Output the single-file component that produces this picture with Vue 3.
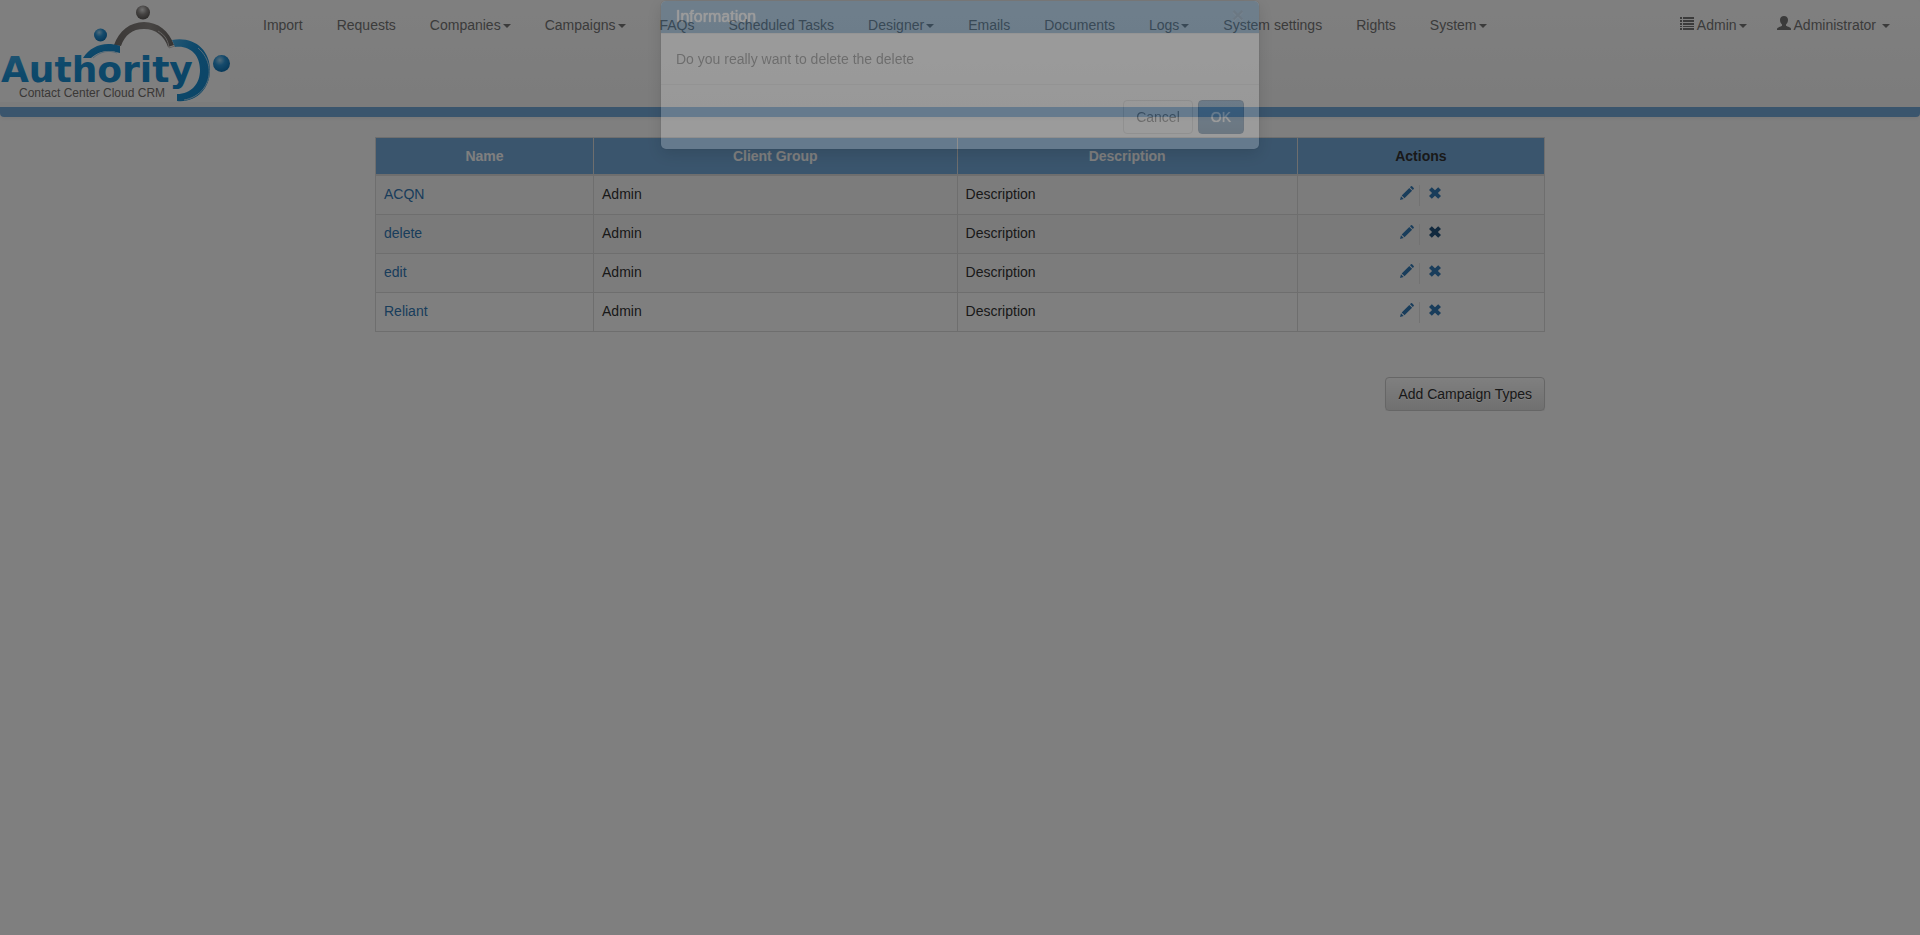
<script setup>
const menu = [
  { label: 'Import' },
  { label: 'Requests' },
  { label: 'Companies', caret: true },
  { label: 'Campaigns', caret: true },
  { label: 'FAQs' },
  { label: 'Scheduled Tasks' },
  { label: 'Designer', caret: true },
  { label: 'Emails' },
  { label: 'Documents' },
  { label: 'Logs', caret: true },
  { label: 'System settings' },
  { label: 'Rights' },
  { label: 'System', caret: true },
]

const rows = [
  { name: 'ACQN' },
  { name: 'delete', active: true },
  { name: 'edit' },
  { name: 'Reliant' },
]
</script>

<template>
  <div class="page">
    <header class="navbar">
      <a class="brand" href="#" aria-label="Authority Contact Center Cloud CRM">
        <svg class="logo" viewBox="0 0 230 102" aria-hidden="true">
          <defs>
            <linearGradient id="blue" x1="0" y1="0" x2="1" y2="1">
              <stop offset="0" stop-color="#4bb0e8" />
              <stop offset="0.35" stop-color="#1c92d6" />
              <stop offset="1" stop-color="#1688cc" />
            </linearGradient>
            <linearGradient id="gray" x1="0" y1="0" x2="1" y2="0">
              <stop offset="0" stop-color="#75706d" />
              <stop offset="0.6" stop-color="#8f8a87" />
              <stop offset="1" stop-color="#6c6764" />
            </linearGradient>
            <radialGradient id="blueBall" cx="0.4" cy="0.3" r="0.7">
              <stop offset="0" stop-color="#9fd6f5" />
              <stop offset="0.45" stop-color="#2a95d8" />
              <stop offset="1" stop-color="#0f72b4" />
            </radialGradient>
            <radialGradient id="grayBall" cx="0.45" cy="0.3" r="0.7">
              <stop offset="0" stop-color="#e0dfde" />
              <stop offset="0.5" stop-color="#8a8684" />
              <stop offset="1" stop-color="#5a5653" />
            </radialGradient>
          </defs>
          <rect width="230" height="102" fill="#fff" />
          <path d="M114 45C119 31 130 22 144 22C158 22 169 31 174 45L168 47C164 36 156 29 144 29C132 29 125 35 121 46Z" fill="url(#gray)" />
          <path d="M158 31C165 35 168 40 169 48L175 46" fill="none" stroke="#c9c6c4" stroke-width="1" />
          <path d="M83 58C91 46 104 41 120 46L120 53C108 49 99 51 91 58Z" fill="url(#blue)" />
          <path d="M93 58C101 51 109 50 117 53" fill="none" stroke="#a9d4ee" stroke-width="1" />
          <path d="M172 40C193 36 210 49 210 70C210 89 196 103 177 101V94C191 94 200 84 200 70C200 55 190 45 175 47Z" fill="url(#blue)" />
          <path d="M198 48C210 58 213 75 204 88C199 95 191 99 184 100" fill="none" stroke="#a9d4ee" stroke-width="1" />
          <circle cx="143" cy="12.500" r="7" fill="url(#grayBall)" />
          <circle cx="100.500" cy="35" r="6.500" fill="url(#blueBall)" />
          <circle cx="221.500" cy="63.500" r="8.500" fill="url(#blueBall)" />
          <text class="logo-name" x="1" y="82">Authority</text>
          <text class="logo-tag" x="19" y="97">Contact Center Cloud CRM</text>
        </svg>
      </a>
      <nav class="menu" aria-label="Main">
        <a v-for="(item, i) in menu" :key="i" class="menu-link" href="#">
          {{ item.label }}<span v-if="item.caret" class="caret"></span>
        </a>
      </nav>
      <nav class="menu account" aria-label="Account">
        <a class="menu-link" href="#">
          <svg class="icon lead" viewBox="0 0 14 14" aria-hidden="true">
            <path d="M0 1h2v2H0zM3 1h11v2H3zM0 4h2v2H0zM3 4h11v2H3zM0 7h2v2H0zM3 7h11v2H3zM0 10h2v1H0zM3 10h11v1H3zM0 12h2v2H0zM3 12h11v2H3z" />
          </svg>Admin<span class="caret"></span>
        </a>
        <a class="menu-link" href="#">
          <svg class="icon lead" viewBox="0 0 14 14" aria-hidden="true">
            <path d="M7 0C9.300 0 11 1.500 11 3.800C11 5.800 10.300 7.500 9 8.500V9.800C10.500 10.800 14 11.300 14 13V14H0V13C0 11.300 3.500 10.800 5 9.800V8.500C3.700 7.500 3 5.800 3 3.800C3 1.500 4.700 0 7 0Z" />
          </svg>Administrator<span class="caret spaced"></span>
        </a>
      </nav>
    </header>

    <main class="content">
      <table class="grid">
        <colgroup>
          <col class="c-name" /><col class="c-group" /><col class="c-desc" /><col class="c-act" />
        </colgroup>
        <thead>
          <tr>
            <th>Name</th>
            <th>Client Group</th>
            <th>Description</th>
            <th class="dark">Actions</th>
          </tr>
        </thead>
        <tbody>
          <tr v-for="row in rows" :key="row.name" :class="{ hovered: row.active }">
            <td><a class="link" href="#">{{ row.name }}</a></td>
            <td>Admin</td>
            <td>Description</td>
            <td>
              <div class="actions">
                <button type="button" class="act" :aria-label="'Edit ' + row.name">
                  <svg class="icon" viewBox="0 0 14 14" aria-hidden="true">
                    <path d="M0 14L1 10.300L3.700 13ZM1.700 9.500L9.300 1.900L12.100 4.700L4.500 12.300ZM10 1.200L10.900 0.300Q11.500 -0.200 12.100 0.300L13.700 1.900Q14.200 2.500 13.700 3.100L12.800 4Z" />
                  </svg>
                </button>
                <span class="divider"></span>
                <button type="button" class="act" :class="{ strong: row.active }" :aria-label="'Delete ' + row.name">
                  <svg class="icon" viewBox="0 0 14 14" aria-hidden="true">
                    <path d="M3.800 1.200L7 4.200L10.200 1.200L13 4L9.900 7L13 10L10.200 12.800L7 9.800L3.800 12.800L1 10L4.100 7L1 4Z" />
                  </svg>
                </button>
              </div>
            </td>
          </tr>
        </tbody>
      </table>
      <div class="footer-actions">
        <button type="button" class="btn btn-raised">Add Campaign Types</button>
      </div>
    </main>

    <div class="backdrop"></div>
    <div class="modal" role="dialog" aria-labelledby="dialog-title">
      <div class="dialog">
        <div class="dialog-head">
          <h4 id="dialog-title" class="dialog-title">Information</h4>
          <button type="button" class="close" aria-label="Close">×</button>
        </div>
        <div class="dialog-body">Do you really want to delete the delete</div>
        <div class="dialog-foot">
          <button type="button" class="btn">Cancel</button>
          <button type="button" class="btn btn-primary">OK</button>
        </div>
      </div>
    </div>
  </div>
</template>

<style>
body {
  background: #fff;
}
</style>

<style scoped>
.page {
  font: 14px/20px "Liberation Sans", Arial, sans-serif;
  color: #333;
}
.page * {
  box-sizing: border-box;
}
.page a {
  text-decoration: none;
}
.navbar {
  display: flex;
  align-items: flex-start;
  min-height: 117px;
  margin-bottom: 20px;
  padding-right: 30px;
  background: linear-gradient(#fff, #f8f8f8);
  border-bottom: 10px solid #75abdb;
  border-radius: 4px;
  box-shadow: 0 1px 5px rgba(0, 0, 0, 0.08);
}
.brand {
  flex: none;
  margin-right: 33px;
}
.logo {
  display: block;
  width: 230px;
  height: 102px;
}
.logo-name {
  font: bold 36px "DejaVu Sans", sans-serif;
  fill: url(#blue);
}
.logo-tag {
  font: 12px "Liberation Sans", Arial, sans-serif;
  fill: #75706d;
}
.menu {
  display: flex;
  gap: 34px;
  padding-top: 15px;
}
.account {
  gap: 30px;
  margin-left: auto;
}
.menu-link {
  color: #777;
  white-space: nowrap;
}
.caret {
  display: inline-block;
  margin-left: 2px;
  vertical-align: middle;
  border-top: 4px solid currentColor;
  border-left: 4px solid transparent;
  border-right: 4px solid transparent;
}
.spaced {
  margin-left: 6px;
}
.icon {
  display: block;
  width: 14px;
  height: 14px;
  fill: currentColor;
}
.lead {
  display: inline-block;
  margin-right: 3px;
  vertical-align: baseline;
}
.content {
  max-width: 1170px;
  margin: 0 auto;
}
.grid {
  width: 100%;
  table-layout: fixed;
  border-collapse: collapse;
  border: 1px solid #ddd;
}
.c-name { width: 18.650%; }
.c-group { width: 31.100%; }
.c-desc { width: 29.100%; }
.c-act { width: 21.150%; }
.grid th,
.grid td {
  padding: 8px;
  border: 1px solid #ddd;
}
.grid th {
  color: #fff;
  background: #75abdb;
  border-bottom-width: 2px;
}
.grid th.dark {
  color: #333;
}
.grid td {
  height: 39px;
  vertical-align: top;
}
.grid tbody tr:nth-child(odd) {
  background: #f9f9f9;
}
.grid tbody tr.hovered {
  background: #f5f5f5;
}
.link {
  color: #337ab7;
}
.actions {
  display: flex;
  align-items: flex-start;
  justify-content: center;
  height: 22px;
}
.act {
  padding: 2px 0 0;
  border: 0;
  background: none;
  color: #337ab7;
}
.act.strong {
  color: #23527c;
}
.divider {
  width: 1px;
  height: 21px;
  margin: 1px 8px 0 5px;
  background: #e5e5e5;
}
.footer-actions {
  display: flex;
  justify-content: flex-end;
  margin-top: 45px;
}
.btn {
  height: 34px;
  padding: 0 12px;
  font: inherit;
  color: #333;
  background: #fff;
  border: 1px solid #ccc;
  border-radius: 4px;
}
.btn-raised {
  background: linear-gradient(#fff, #e0e0e0);
  text-shadow: 0 1px 0 #fff;
  box-shadow: inset 0 1px 0 rgba(255, 255, 255, 0.15), 0 1px 1px rgba(0, 0, 0, 0.08);
}
.btn-primary {
  color: #fff;
  background: linear-gradient(#337ab7, #265a88);
  border-color: #245580;
  text-shadow: 0 0 1px #fff;
}
.backdrop {
  position: fixed;
  inset: 0;
  background: rgba(0, 0, 0, 0.5);
}
.modal {
  position: fixed;
  inset: 0;
  opacity: 0.22;
}
.dialog {
  max-width: 600px;
  margin: 0 auto;
  background: #fff;
  background-clip: padding-box;
  border: 1px solid rgba(0, 0, 0, 0.2);
  border-radius: 6px;
  box-shadow: 0 5px 15px rgba(0, 0, 0, 0.5);
}
.dialog-head {
  display: flex;
  align-items: flex-start;
  justify-content: space-between;
  min-height: 33px;
  padding: 5px 15px;
  color: #fff;
  background: #337ab7;
  border-bottom: 1px solid #e5e5e5;
  border-radius: 5px 5px 0 0;
}
.dialog-title {
  margin: 0;
  font-size: 16px;
  line-height: 22px;
  font-weight: 500;
  text-shadow: 0 0 1px #fff, 0 0 1px #fff;
}
.close {
  padding: 0;
  border: 0;
  background: none;
  font: bold 21px/18px "Liberation Sans", Arial, sans-serif;
  color: #000;
  text-shadow: 0 1px 0 #fff;
  opacity: 0.2;
}
.dialog-body {
  padding: 15px;
}
.dialog-foot {
  display: flex;
  justify-content: flex-end;
  gap: 5px;
  padding: 15px;
  border-top: 1px solid #e5e5e5;
}
</style>
